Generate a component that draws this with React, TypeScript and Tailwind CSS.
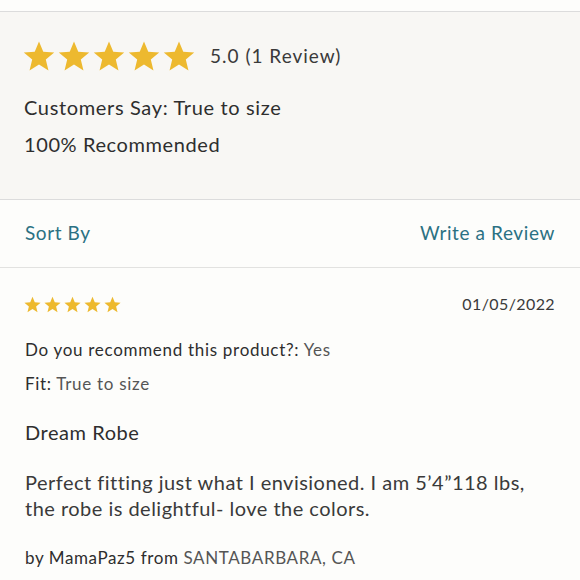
import React from "react";

const Star = ({ size }: { size: number }) => (
  <svg width={size} height={size} viewBox="0 0 24 24" className="shrink-0">
    <path
      d="M12 1.2l3.2 7.6 8.2.6-6.3 5.3 2 8.1L12 18.4l-7.1 4.4 2-8.1L.6 9.4l8.2-.6z"
      fill="#edb92f"
    />
  </svg>
);

export default function App() {
  const font = { fontFamily: "Lato, 'Noto Sans', sans-serif" };
  return (
    <div className="w-[580px] h-[580px] overflow-hidden bg-[#fdfdfb] text-[#333]" style={font}>
      <div className="h-[11px] bg-[#fdfdfb]" />
      <div className="border-t border-b border-[#dcdcdc] bg-[#f8f7f4] h-[189px] px-[24px] pt-[27px]">
        <div className="flex items-center h-[34px]">
          <div className="flex gap-[3px] -ml-[1px]">
            {[0, 1, 2, 3, 4].map((i) => (
              <Star key={i} size={32} />
            ))}
          </div>
          <span className="ml-[15px] text-[19px] tracking-[1px] text-[#3a3a3a]">5.0 (1 Review)</span>
        </div>
        <div className="mt-[21px] text-[20px] tracking-[0.65px] text-[#2e2e2e] leading-[26px]">Customers Say: True to size</div>
        <div className="mt-[11px] text-[20px] tracking-[0.6px] text-[#2e2e2e] leading-[26px]">100% Recommended</div>
      </div>
      <div className="flex justify-between items-center h-[68px] px-[25px] border-b border-[#e2e2e0] text-[19px] tracking-[0.6px] text-[#2b7183]">
        <span>Sort By</span>
        <span>Write a Review</span>
      </div>
      <div className="px-[25px] pt-[25px]">
        <div className="flex justify-between items-center h-[22px]">
          <div className="flex gap-[3px] -ml-[1px]">
            {[0, 1, 2, 3, 4].map((i) => (
              <Star key={i} size={17} />
            ))}
          </div>
          <span className="text-[16px] tracking-[0.4px] text-[#3a3a3a]">01/05/2022</span>
        </div>
        <div className="mt-[24px] text-[17px] tracking-[0.7px] leading-[22px]">
          <span className="text-[#2e2e2e]">Do you recommend this product?: </span>
          <span className="text-[#555]">Yes</span>
        </div>
        <div className="mt-[12px] text-[17px] tracking-[0.7px] leading-[22px]">
          <span className="text-[#2e2e2e]">Fit: </span>
          <span className="text-[#555]">True to size</span>
        </div>
        <div className="mt-[24px] text-[20px] tracking-[0.55px] leading-[26px] text-[#2e2e2e]">Dream Robe</div>
        <div className="mt-[24px] text-[20px] tracking-[0.48px] leading-[26px] text-[#3a3a3a]">
          Perfect fitting just what I envisioned. I am 5’4”118 lbs,
          <br />
          the robe is delightful- love the colors.
        </div>
        <div className="mt-[25px] text-[17px] tracking-[0.6px] leading-[24px]">
          <span className="text-[#2e2e2e]">by MamaPaz5 from </span>
          <span className="text-[#555]">SANTABARBARA, CA</span>
        </div>
      </div>
    </div>
  );
}
